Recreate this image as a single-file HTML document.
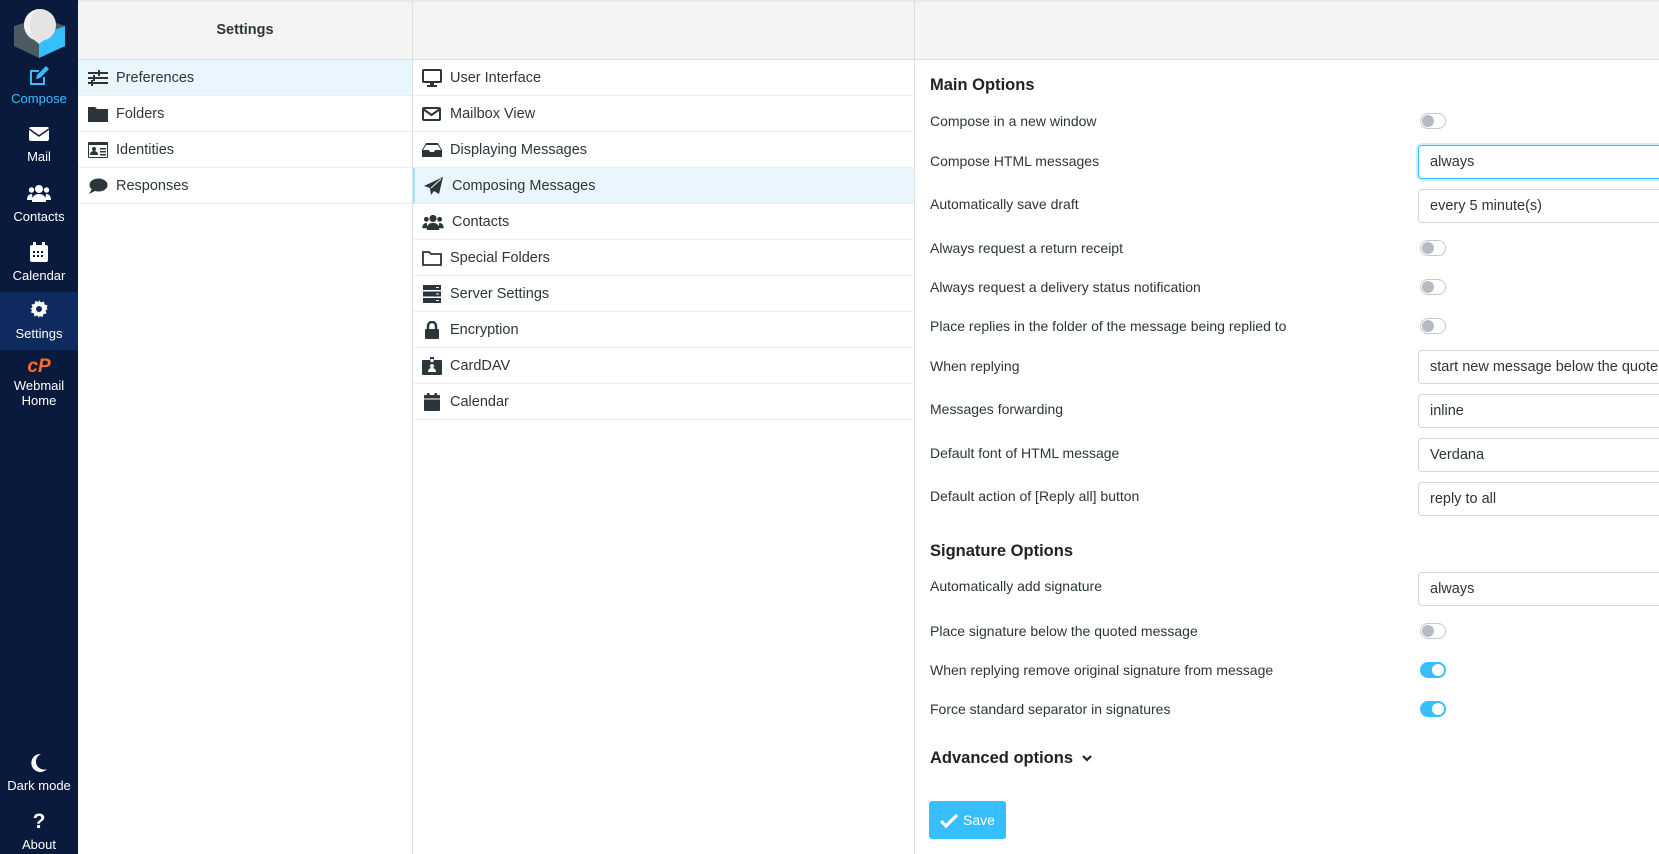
<!DOCTYPE html>
<html><head><meta charset="utf-8"><style>
*{box-sizing:border-box;margin:0;padding:0}
body{width:1659px;height:854px;overflow:hidden;font-family:"Liberation Sans",Arial,sans-serif;color:#2c363a;background:#fff;position:relative;font-size:14.5px}
.a{position:absolute}
#side{left:0;top:0;width:78px;height:854px;background:#0a1a3d;color:#fff}
.si{position:absolute;left:0;width:78px;text-align:center;font-size:13px;color:#fff}
.si svg{display:block;margin:0 auto}
.hdr{top:0;height:60px;background:#f4f4f4;border-bottom:1px solid #ddd;border-top:2px solid #e8e8e8}
.row{position:absolute;height:36px;border-bottom:1px solid #eee;display:flex;align-items:center;font-size:14.5px}
.row svg{margin-right:8px;flex:none}
.lbl{position:absolute;left:930px;font-size:14px;line-height:18px}
.tg{position:absolute;left:1420px;width:26px;height:16px;border:1px solid #c4c8cc;border-radius:8px;background:#fff}
.tg::after{content:"";position:absolute;left:1px;top:1px;width:12px;height:12px;border-radius:50%;background:#b5bbc1}
.tg.on{background:#37beff;border-color:#37beff}
.tg.on::after{left:11px;background:#fff}
.inp{position:absolute;left:1418px;width:260px;height:34px;border:1px solid #d4d7da;border-radius:4px;padding-left:11px;line-height:32px;font-size:14.5px}
h3{position:absolute;left:930px;font-size:16.5px;font-weight:bold;color:#222}
</style></head><body>
<div id="side" class="a">
<svg class="a" style="left:13px;top:6px" width="53" height="52" viewBox="0 0 53 52"><path d="M1 20 L14 16 L26 22 L40 16 L52 20 L52 40 L26 52 L1 40Z" fill="#4c5a61"/><path d="M26 30 L52 20 L52 40 L26 52Z" fill="#37beff"/><circle cx="27" cy="19" r="16" fill="#e4e4e4"/><path d="M27 3 A16 16 0 0 0 27 35 L27 35 A10 16 0 0 1 27 3Z" fill="#f2f2f2"/><path d="M14 28 L26 38 L38 28" fill="#e4e4e4"/></svg>
<div class="si" style="top:66px;color:#37beff"><svg width="22" height="20" viewBox="0 0 22 20"><path d="M2 4h9v2H4v11h11v-6h2v8H2z" fill="#37beff"/><path d="M8 13l1-4 9-9 3 3-9 9z" fill="#37beff"/></svg><div style="margin-top:5px">Compose</div></div>
<div class="si" style="top:126px"><svg width="20" height="16" viewBox="0 0 20 16"><rect x="0" y="1" width="20" height="14" rx="2" fill="#fff"/><path d="M0 3l10 7 10-7" stroke="#0a1a3d" stroke-width="1.5" fill="none"/></svg><div style="margin-top:7px">Mail</div></div>
<div class="si" style="top:184px"><svg width="24" height="18" viewBox="0 0 24 18"><circle cx="12" cy="5" r="4" fill="#fff"/><circle cx="4.5" cy="6" r="2.7" fill="#fff"/><circle cx="19.5" cy="6" r="2.7" fill="#fff"/><path d="M5 18c0-6 3-8 7-8s7 2 7 8z" fill="#fff"/><path d="M0 16c0-4 2-6 5-6l1 6zM24 16c0-4-2-6-5-6l-1 6z" fill="#fff"/></svg><div style="margin-top:7px">Contacts</div></div>
<div class="si" style="top:242px"><svg width="18" height="20" viewBox="0 0 18 20"><rect x="0" y="3" width="18" height="17" rx="2" fill="#fff"/><rect x="3" y="0" width="3" height="5" fill="#fff"/><rect x="12" y="0" width="3" height="5" fill="#fff"/><g fill="#0a1a3d"><rect x="3" y="9" width="2" height="2"/><rect x="7" y="9" width="2" height="2"/><rect x="11" y="9" width="2" height="2"/><rect x="3" y="13" width="2" height="2"/><rect x="7" y="13" width="2" height="2"/><rect x="11" y="13" width="2" height="2"/></g></svg><div style="margin-top:6px">Calendar</div></div>
<div class="a" style="left:0;top:292px;width:78px;height:58px;background:#0f2a5e"></div>
<div class="si" style="top:300px"><svg width="18" height="18" viewBox="0 0 18 18"><path d="M9 0l2 2.5 3-1 .5 3 3 1-1 3L18 9l-2.5 1.5 1 3-3 .5-1 3-3-1L9 18l-1.5-2.5-3 1-.5-3-3-1 1-3L0 9l2.5-1.5-1-3 3-.5 1-3 3 1z" fill="#fff"/><circle cx="9" cy="9" r="3" fill="#0f2a5e"/></svg><div style="margin-top:8px">Settings</div></div>
<div class="si" style="top:357px"><div style="color:#ff6c2c;font-weight:bold;font-style:italic;font-size:19px;line-height:20px">cP</div><div style="margin-top:1px;line-height:15px">Webmail<br>Home</div></div>
<div class="si" style="top:754px"><svg width="16" height="18" viewBox="0 0 16 18"><path d="M10 0A9 9 0 1 0 16 15 7 7 0 0 1 10 0z" fill="#fff"/></svg><div style="margin-top:6px">Dark mode</div></div>
<div class="si" style="top:812px"><div style="font-weight:bold;font-size:21px;line-height:20px">?</div><div style="margin-top:5px">About</div></div>
</div>

<div class="a hdr" style="left:78px;width:335px;border-right:1px solid #ddd;text-align:center;line-height:56px;font-weight:bold;font-size:14.5px">Settings</div>
<div class="a hdr" style="left:413px;width:502px;border-right:1px solid #ddd"></div>
<div class="a hdr" style="left:915px;width:744px"></div>
<div class="a" style="left:412px;top:60px;width:1px;height:794px;background:#ddd"></div>
<div class="a" style="left:914px;top:60px;width:1px;height:794px;background:#ddd"></div>

<div class="row" style="left:78px;top:60px;width:334px;background:#e9f6fd;padding-left:10px"><svg width="20" height="16" viewBox="0 0 20 16"><g fill="#333"><rect y="2" width="20" height="2"/><rect y="7" width="20" height="2"/><rect y="12" width="20" height="2"/><rect x="10" y="0" width="2" height="6"/><rect x="5" y="5" width="2" height="6"/><rect x="3" y="10" width="2" height="6"/></g></svg>Preferences</div>
<div class="row" style="left:78px;top:96px;width:334px;padding-left:10px"><svg width="20" height="16" viewBox="0 0 20 16"><path d="M0 1h7l2 2h11v13H0z" fill="#2c363a"/></svg>Folders</div>
<div class="row" style="left:78px;top:132px;width:334px;padding-left:10px"><svg width="20" height="16" viewBox="0 0 20 16"><rect width="20" height="16" rx="1" fill="#2c363a"/><rect x="1" y="3" width="18" height="12" fill="#fff"/><circle cx="6" cy="7" r="2" fill="#2c363a"/><path d="M2 13c0-3 2-4 4-4s4 1 4 4z" fill="#2c363a"/><rect x="12" y="6" width="6" height="1.5" fill="#2c363a"/><rect x="12" y="9" width="6" height="1.5" fill="#2c363a"/><rect x="12" y="12" width="6" height="1.5" fill="#2c363a"/></svg>Identities</div>
<div class="row" style="left:78px;top:168px;width:334px;padding-left:10px"><svg width="20" height="16" viewBox="0 0 20 16"><ellipse cx="10.5" cy="7" rx="9" ry="6.5" fill="#2c363a"/><path d="M1 16l3-5 3 2z" fill="#2c363a"/></svg>Responses</div>

<div class="row" style="left:413px;top:60px;width:501px;padding-left:9px"><svg width="20" height="18" viewBox="0 0 20 18"><rect x="1" y="1" width="18" height="12" rx="1" fill="none" stroke="#2c363a" stroke-width="2"/><rect x="8" y="13" width="4" height="3" fill="#2c363a"/><rect x="5" y="16" width="10" height="2" fill="#2c363a"/></svg>User Interface</div>
<div class="row" style="left:413px;top:96px;width:501px;padding-left:9px"><svg width="20" height="16" viewBox="0 0 20 16"><rect x="1" y="2" width="17" height="12" rx="1" fill="none" stroke="#2c363a" stroke-width="2"/><path d="M1 3l8.5 6L18 3" fill="none" stroke="#2c363a" stroke-width="2"/></svg>Mailbox View</div>
<div class="row" style="left:413px;top:132px;width:501px;padding-left:9px"><svg width="20" height="16" viewBox="0 0 20 16"><path d="M4 1h12l4 7v7H0V8z" fill="#2c363a"/><path d="M4 3h12l3 5h-6l-1 2h-4l-1-2H1z" fill="#fff"/></svg>Displaying Messages</div>
<div class="row" style="left:413px;top:168px;width:501px;padding-left:9px;background:#e9f6fd;border-left:2px solid #a9dff9"><svg width="20" height="18" viewBox="0 0 20 18"><path d="M19 0L0 9l6 2 1 7 3-4 5 3z" fill="#2c363a"/><path d="M17 2L7 11" stroke="#e9f6fd" stroke-width="1"/></svg>Composing Messages</div>
<div class="row" style="left:413px;top:204px;width:501px;padding-left:9px"><svg width="22" height="16" viewBox="0 0 24 18"><circle cx="12" cy="5" r="4" fill="#2c363a"/><circle cx="4.5" cy="6" r="2.7" fill="#2c363a"/><circle cx="19.5" cy="6" r="2.7" fill="#2c363a"/><path d="M5 18c0-6 3-8 7-8s7 2 7 8z" fill="#2c363a"/><path d="M0 16c0-4 2-6 5-6l1 6zM24 16c0-4-2-6-5-6l-1 6z" fill="#2c363a"/></svg>Contacts</div>
<div class="row" style="left:413px;top:240px;width:501px;padding-left:9px"><svg width="20" height="16" viewBox="0 0 20 16"><path d="M1 2h6l2 2h10v11H1z" fill="none" stroke="#2c363a" stroke-width="1.8"/></svg>Special Folders</div>
<div class="row" style="left:413px;top:276px;width:501px;padding-left:9px"><svg width="20" height="18" viewBox="0 0 20 18"><rect x="1" y="0" width="18" height="5" fill="#2c363a"/><rect x="1" y="6.5" width="18" height="5" fill="#2c363a"/><rect x="1" y="13" width="18" height="5" fill="#2c363a"/><g fill="#fff"><rect x="14" y="2" width="3" height="1"/><rect x="14" y="8.5" width="3" height="1"/><rect x="14" y="15" width="3" height="1"/></g></svg>Server Settings</div>
<div class="row" style="left:413px;top:312px;width:501px;padding-left:9px"><svg width="20" height="18" viewBox="0 0 20 18"><path d="M6 8V5a4 4 0 0 1 8 0v3" fill="none" stroke="#2c363a" stroke-width="2.5"/><rect x="3" y="8" width="14" height="10" rx="1" fill="#2c363a"/></svg>Encryption</div>
<div class="row" style="left:413px;top:348px;width:501px;padding-left:9px"><svg width="20" height="18" viewBox="0 0 20 18"><rect x="0" y="3" width="20" height="15" rx="1" fill="#2c363a"/><rect x="8" y="0" width="4" height="5" fill="#2c363a"/><rect x="8.5" y="2" width="3" height="3" fill="#fff"/><circle cx="10" cy="9" r="2" fill="#fff"/><path d="M6 15c0-3 2-4 4-4s4 1 4 4z" fill="#fff"/></svg>CardDAV</div>
<div class="row" style="left:413px;top:384px;width:501px;padding-left:9px"><svg width="20" height="18" viewBox="0 0 20 18"><rect x="2" y="2" width="16" height="16" rx="1" fill="#2c363a"/><rect x="5" y="0" width="2.5" height="4" fill="#2c363a"/><rect x="12.5" y="0" width="2.5" height="4" fill="#2c363a"/><rect x="2" y="5.5" width="16" height="1" fill="#fff"/></svg>Calendar</div>

<h3 style="top:76px">Main Options</h3>
<div class="lbl" style="top:112px">Compose in a new window</div><div class="tg" style="top:113px"></div>
<div class="lbl" style="top:152px">Compose HTML messages</div><div class="inp" style="top:145px;border-color:#37beff;box-shadow:0 0 0 2px #cdefff">always</div>
<div class="lbl" style="top:195px">Automatically save draft</div><div class="inp" style="top:189px">every 5 minute(s)</div>
<div class="lbl" style="top:239px">Always request a return receipt</div><div class="tg" style="top:240px"></div>
<div class="lbl" style="top:278px">Always request a delivery status notification</div><div class="tg" style="top:279px"></div>
<div class="lbl" style="top:317px">Place replies in the folder of the message being replied to</div><div class="tg" style="top:318px"></div>
<div class="lbl" style="top:357px">When replying</div><div class="inp" style="top:350px">start new message below the quote</div>
<div class="lbl" style="top:400px">Messages forwarding</div><div class="inp" style="top:394px">inline</div>
<div class="lbl" style="top:444px">Default font of HTML message</div><div class="inp" style="top:438px">Verdana</div>
<div class="lbl" style="top:487px">Default action of [Reply all] button</div><div class="inp" style="top:482px">reply to all</div>

<h3 style="top:542px">Signature Options</h3>
<div class="lbl" style="top:577px">Automatically add signature</div><div class="inp" style="top:572px">always</div>
<div class="lbl" style="top:622px">Place signature below the quoted message</div><div class="tg" style="top:623px"></div>
<div class="lbl" style="top:661px">When replying remove original signature from message</div><div class="tg on" style="top:662px"></div>
<div class="lbl" style="top:700px">Force standard separator in signatures</div><div class="tg on" style="top:701px"></div>

<h3 style="top:749px">Advanced options <svg width="12" height="10" viewBox="0 0 12 10" style="margin-left:3px"><path d="M2 3l4 4 4-4" fill="none" stroke="#222" stroke-width="2.2"/></svg></h3>
<div class="a" style="left:929px;top:801px;width:77px;height:38px;background:#37beff;border-radius:3px;color:#fff;font-size:14px;display:flex;align-items:center;padding-left:11px"><svg width="18" height="15" viewBox="0 0 18 15" style="margin-right:5px"><path d="M1 8l5 5L17 2" fill="none" stroke="#fff" stroke-width="3.2"/></svg>Save</div>
</body></html>
